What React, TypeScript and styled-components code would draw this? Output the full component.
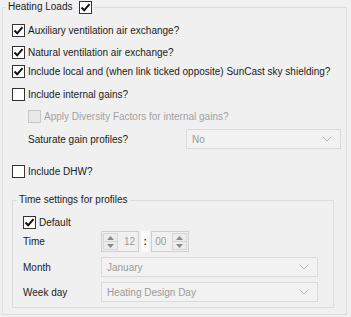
import React from "react";
import styled, { createGlobalStyle } from "styled-components";

const GlobalStyle = createGlobalStyle`
  html, body {
    margin: 0;
    padding: 0;
    background: #f0f0f0;
  }
  body {
    font-family: "Liberation Sans", Arial, sans-serif;
    font-size: 10px;
    color: #1b1b1b;
    width: 351px;
    height: 317px;
    overflow: hidden;
  }
`;

const Check: React.FC<{ checked?: boolean; disabled?: boolean }> = ({
  checked,
  disabled,
}) => (
  <CheckBox $disabled={disabled}>
    {checked && (
      <svg width="11" height="11" viewBox="0 0 11 11">
        <path
          d="M1.5 5.5 L4.2 8.3 L9.5 2.2"
          fill="none"
          stroke="#111"
          strokeWidth="2"
        />
      </svg>
    )}
  </CheckBox>
);

const Chevron = () => (
  <svg width="10" height="6" viewBox="0 0 10 6">
    <path d="M0.5 0.5 L5 5 L9.5 0.5" fill="none" stroke="#b4b4b4" strokeWidth="1" />
  </svg>
);

const Combo: React.FC<{ value: string; width: number }> = ({ value, width }) => (
  <ComboBox style={{ width }}>
    <span>{value}</span>
    <Chevron />
  </ComboBox>
);

const SpinButtons = () => (
  <Spin>
    <SpinHalf>
      <svg width="7" height="4" viewBox="0 0 7 4">
        <path d="M0 4 L3.5 0 L7 4 Z" fill="#8a8a8a" />
      </svg>
    </SpinHalf>
    <SpinHalf>
      <svg width="7" height="4" viewBox="0 0 7 4">
        <path d="M0 0 L3.5 4 L7 0 Z" fill="#8a8a8a" />
      </svg>
    </SpinHalf>
  </Spin>
);

const App = () => (
  <>
    <GlobalStyle />
    <Group $outer>
      <Legend $outer>
        Heating Loads
        <Check checked />
      </Legend>
      <GroupBody $outer>
        <Row $top={8}>
          <Check checked />
          Auxiliary ventilation air exchange?
        </Row>
        <Row $top={6}>
          <Check checked />
          Natural ventilation air exchange?
        </Row>
        <Row $top={3}>
          <Check checked />
          Include local and (when link ticked opposite) SunCast sky shielding?
        </Row>
        <Row $top={7}>
          <Check />
          Include internal gains?
        </Row>
        <Row $top={6} $indent={16} $disabled>
          <Check disabled />
          Apply Diversity Factors for internal gains?
        </Row>
        <FieldRow $top={5} $indent={16}>
          <span>Saturate gain profiles?</span>
          <Combo value="No" width={155} />
        </FieldRow>
        <Row $top={14}>
          <Check />
          Include DHW?
        </Row>
        <Group>
          <Legend>Time settings for profiles</Legend>
          <GroupBody>
            <Row $top={7}>
              <Check checked />
              Default
            </Row>
            <FieldRow $top={1}>
              <Label>Time</Label>
              <TimeSpin>
                <SpinField>
                  <SpinButtons />
                  <SpinValue>12</SpinValue>
                </SpinField>
                <Colon>:</Colon>
                <SpinField>
                  <SpinValue>00</SpinValue>
                  <SpinButtons />
                </SpinField>
              </TimeSpin>
            </FieldRow>
            <FieldRow $top={5}>
              <Label>Month</Label>
              <Combo value="January" width={217} />
            </FieldRow>
            <FieldRow $top={5}>
              <Label>Week day</Label>
              <Combo value="Heating Design Day" width={217} />
            </FieldRow>
          </GroupBody>
        </Group>
      </GroupBody>
    </Group>
  </>
);

export default App;

const Group = styled.fieldset<{ $outer?: boolean }>`
  margin: ${(p) => (p.$outer ? "0 4px 0 2px" : "14px 7px 0 0")};
  padding: 0;
  border: 1px solid #dcdcdc;
  min-width: 0;
`;

const Legend = styled.legend<{ $outer?: boolean }>`
  display: flex;
  align-items: center;
  gap: 6px;
  height: 14px;
  margin-left: ${(p) => (p.$outer ? "3px" : "4px")};
  padding: 0 2px;
  line-height: 14px;
`;

const GroupBody = styled.div<{ $outer?: boolean }>`
  display: flex;
  flex-direction: column;
  padding: ${(p) => (p.$outer ? "0 5px 6px 9px" : "0 15px 5px 10px")};
`;

const Row = styled.div<{ $top: number; $indent?: number; $disabled?: boolean }>`
  display: flex;
  align-items: center;
  gap: 3px;
  height: 16px;
  margin-top: ${(p) => p.$top}px;
  margin-left: ${(p) => p.$indent ?? 0}px;
  color: ${(p) => (p.$disabled ? "#a2a2a2" : "inherit")};
  white-space: nowrap;
`;

const FieldRow = styled.div<{ $top: number; $indent?: number }>`
  display: flex;
  align-items: center;
  justify-content: space-between;
  margin-top: ${(p) => p.$top}px;
  margin-left: ${(p) => p.$indent ?? 0}px;
  white-space: nowrap;
`;

const Label = styled.span`
  width: 78px;
  flex: none;
`;

const CheckBox = styled.span<{ $disabled?: boolean }>`
  display: inline-flex;
  align-items: center;
  justify-content: center;
  box-sizing: border-box;
  width: 13px;
  height: 13px;
  flex: none;
  border: 1px solid ${(p) => (p.$disabled ? "#c6c6c6" : "#333")};
  background: ${(p) => (p.$disabled ? "#e8e8e8" : "#fff")};
`;

const ComboBox = styled.div`
  display: flex;
  align-items: center;
  justify-content: space-between;
  box-sizing: border-box;
  height: 20px;
  padding: 0 8px 0 5px;
  border: 1px solid #dadada;
  background: #f2f2f2;
  color: #9a9a9a;
  margin-left: auto;
`;

const TimeSpin = styled.div`
  display: flex;
  align-items: stretch;
  height: 21px;
  margin-right: auto;
`;

const SpinField = styled.div`
  display: flex;
  align-items: center;
  gap: 4px;
  box-sizing: border-box;
  height: 21px;
  padding: 0 1px;
  border: 1px solid #cfcfcf;
  background: #f0f0f0;
`;

const SpinValue = styled.span`
  color: #9a9a9a;
  padding: 0 2px;
`;

const Colon = styled.span`
  display: flex;
  align-items: center;
  justify-content: center;
  width: 8px;
  margin: 0 2px;
  background: #fafafa;
  color: #333;
  font-weight: bold;
`;

const Spin = styled.div`
  display: flex;
  flex-direction: column;
  width: 15px;
  height: 17px;
`;

const SpinHalf = styled.div`
  flex: 1;
  display: flex;
  align-items: center;
  justify-content: center;
  border: 1px solid #d6d6d6;
  background: #ececec;
  & + & {
    border-top: none;
  }
`;
